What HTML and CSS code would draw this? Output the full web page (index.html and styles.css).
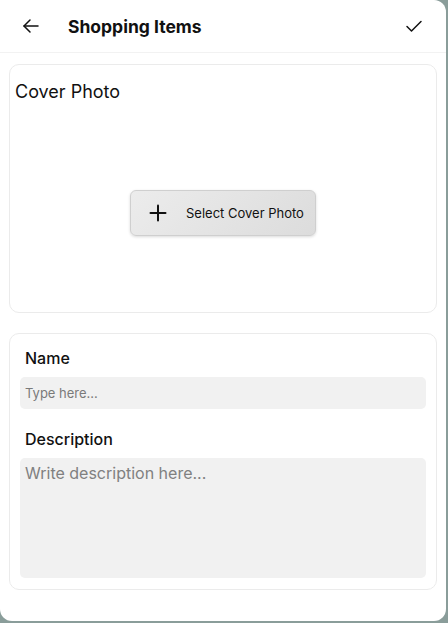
FILE: index.html
```html
<!DOCTYPE html>
<html lang="en">
<head>
    <meta charset="UTF-8">
    <meta name="viewport" content="width=device-width, initial-scale=1.0">
    <title>Shopping Items</title>
    <link rel="stylesheet" href="styles.css">
</head>
<body>

    <div class="sheet">
        <header class="topbar">
            <button class="icon-btn back-btn" aria-label="Back">
                <svg width="20" height="20" viewBox="0 0 20 20" fill="none" stroke="#111" stroke-width="1.5" stroke-linecap="round" stroke-linejoin="round">
                    <path d="M17 10H3"/>
                    <path d="M9 4L3 10l6 6"/>
                </svg>
            </button>
            <h1>Shopping Items</h1>
            <button class="icon-btn save-btn" aria-label="Save">
                <svg width="20" height="20" viewBox="0 0 20 20" fill="none" stroke="#111" stroke-width="1.5" stroke-linecap="round" stroke-linejoin="round">
                    <path d="M3 10.5l4.5 4.5L17 5.5"/>
                </svg>
            </button>
        </header>

        <section class="card cover-card">
            <h2>Cover Photo</h2>
            <div class="cover-area">
                <button class="select-btn">
                    <svg width="18" height="18" viewBox="0 0 18 18" fill="none" stroke="#111" stroke-width="2" stroke-linecap="round">
                        <path d="M9 1.5v15"/>
                        <path d="M1.5 9h15"/>
                    </svg>
                    <span>Select Cover Photo</span>
                </button>
            </div>
        </section>

        <section class="card form-card">
            <label class="field-label" for="name">Name</label>
            <input class="field-input" id="name" type="text" placeholder="Type here...">

            <label class="field-label desc-label" for="desc">Description</label>
            <textarea class="field-area" id="desc" placeholder="Write description here..."></textarea>
        </section>
    </div>

</body>
</html>
```

FILE: styles.css
```css
* {
    margin: 0;
    padding: 0;
    box-sizing: border-box;
}
body {
    font-family: Inter, "Noto Sans", Arial, sans-serif;
    background-color: #8a9d9a;
    color: #111;
}
.sheet {
    width: 446px;
    height: 621px;
    background-color: #ffffff;
    border-radius: 0 12px 12px 12px;
    overflow: hidden;
}
.topbar {
    height: 53px;
    display: flex;
    align-items: center;
    padding: 0 22px 0 21px;
    border-bottom: 1px solid #f2f2f2;
}
.topbar h1 {
    flex: 1;
    font-size: 17.5px;
    font-weight: 700;
    margin-left: 27px;
    margin-top: 0;
}
.icon-btn {
    background: none;
    border: none;
    width: 20px;
    height: 20px;
    display: flex;
    align-items: center;
    justify-content: center;
    cursor: pointer;
}
.card {
    margin: 0 9px;
    border: 1px solid #ebebeb;
    border-radius: 10px;
    background-color: #fff;
}
.cover-card {
    margin-top: 11px;
    height: 249px;
    display: flex;
    flex-direction: column;
}
.cover-card h2 {
    font-size: 18px;
    font-weight: 400;
    padding: 16px 0 0 5px;
    line-height: 22px;
}
.cover-area {
    flex: 1;
    display: flex;
    align-items: center;
    justify-content: center;
    padding-top: 10px;
}
.select-btn {
    display: flex;
    align-items: center;
    gap: 19px;
    width: 186px;
    height: 46px;
    padding: 0 0 0 18px;
    font-family: inherit;
    font-size: 13px;
    white-space: nowrap;
    color: #111;
    background: linear-gradient(135deg, #ececec, #dcdcdc);
    border: 1px solid #cfcfcf;
    border-radius: 6px;
    box-shadow: 0 1px 3px rgba(0, 0, 0, 0.15);
    cursor: pointer;
}
.form-card {
    margin-top: 20px;
    height: 257px;
    padding: 14px 10px 0 10px;
    display: flex;
    flex-direction: column;
}
.field-label {
    font-size: 16px;
    font-weight: 500;
    padding-left: 5px;
    line-height: 20px;
}
.desc-label {
    margin-top: 20px;
}
.field-input {
    margin-top: 9px;
    height: 32px;
    border: none;
    border-radius: 5px;
    background-color: #f1f1f1;
    padding: 0 5px;
    font-family: inherit;
    font-size: 13px;
    color: #111;
}
.field-input::placeholder {
    color: #7a7a7a;
}
.field-area {
    margin-top: 9px;
    height: 120px;
    border: none;
    border-radius: 5px;
    background-color: #f1f1f1;
    padding: 5px 5px;
    font-family: inherit;
    font-size: 16px;
    resize: none;
    color: #111;
}
.field-area::placeholder {
    color: #808080;
}
```
